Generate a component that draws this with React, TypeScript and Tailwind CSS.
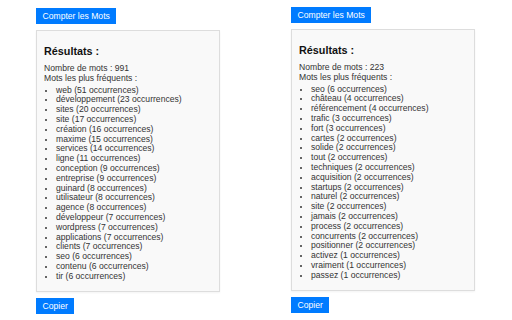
const left: [string, number][] = [
  ['web', 51],
  ['développement', 23],
  ['sites', 20],
  ['site', 17],
  ['création', 16],
  ['maxime', 15],
  ['services', 14],
  ['ligne', 11],
  ['conception', 9],
  ['entreprise', 9],
  ['guinard', 8],
  ['utilisateur', 8],
  ['agence', 8],
  ['développeur', 7],
  ['wordpress', 7],
  ['applications', 7],
  ['clients', 7],
  ['seo', 6],
  ['contenu', 6],
  ['tir', 6],
]

const right: [string, number][] = [
  ['seo', 6],
  ['château', 4],
  ['référencement', 4],
  ['trafic', 3],
  ['fort', 3],
  ['cartes', 2],
  ['solide', 2],
  ['tout', 2],
  ['techniques', 2],
  ['acquisition', 2],
  ['startups', 2],
  ['naturel', 2],
  ['site', 2],
  ['jamais', 2],
  ['process', 2],
  ['concurrents', 2],
  ['positionner', 2],
  ['activez', 1],
  ['vraiment', 1],
  ['passez', 1],
]

function Panel({ total, words, top }: { total: number; words: [string, number][]; top: string }) {
  return (
    <div className={`flex w-[184px] flex-col items-start ${top}`}>
      <button className="h-[16px] bg-[#007bff] px-[6.5px] text-[8.6px] leading-[16px] text-white">
        Compter les Mots
      </button>
      <div className="mt-[6px] w-full border border-[#dddddd] bg-[#f9f9f9] p-[9px] pl-[7px] text-[#333333] shadow-[0_1px_2px_rgba(0,0,0,0.05)]">
        <h3 className="mt-[5px] mb-[7px] text-[10.8px] leading-[12px] font-bold text-[#111111]">Résultats :</h3>
        <p className="text-[8.6px] leading-[9.8px]">Nombre de mots : {total}</p>
        <p className="text-[8.6px] leading-[9.8px]">Mots les plus fréquents :</p>
        <ul className="mt-[2px] list-disc pl-[12px] text-[8.6px] leading-[9.8px] marker:text-[7px]">
          {words.map(([w, n]) => (
            <li key={w}>
              {w} ({n} occurrences)
            </li>
          ))}
        </ul>
      </div>
      <button className="mt-[6px] h-[16px] bg-[#007bff] px-[6.5px] text-[8.6px] leading-[16px] text-white">
        Copier
      </button>
    </div>
  )
}

export default function App() {
  return (
    <div
      className="flex h-[320px] w-[512px] gap-[71px] bg-white pl-[36px]"
      style={{ fontFamily: '"Liberation Sans", Arial, sans-serif' }}
    >
      <Panel total={991} words={left} top="pt-[8px]" />
      <Panel total={223} words={right} top="pt-[7px]" />
    </div>
  )
}
